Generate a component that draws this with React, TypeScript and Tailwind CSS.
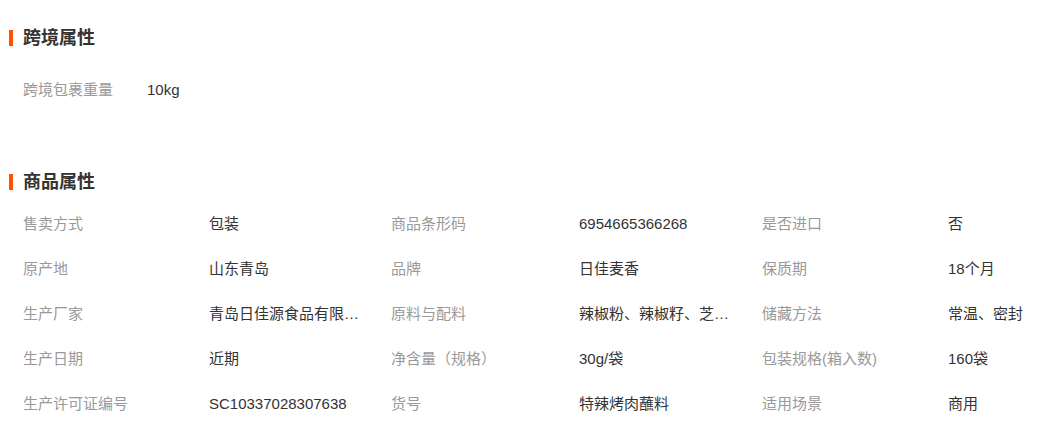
import { Fragment } from 'react';

const font = { fontFamily: '"Liberation Sans", "Noto Sans CJK SC", sans-serif' };

const rows: [string, string][][] = [
  [
    ['售卖方式', '包装'],
    ['商品条形码', '6954665366268'],
    ['是否进口', '否'],
  ],
  [
    ['原产地', '山东青岛'],
    ['品牌', '日佳麦香'],
    ['保质期', '18个月'],
  ],
  [
    ['生产厂家', '青岛日佳源食品有限公司'],
    ['原料与配料', '辣椒粉、辣椒籽、芝麻、食用盐'],
    ['储藏方法', '常温、密封'],
  ],
  [
    ['生产日期', '近期'],
    ['净含量（规格）', '30g/袋'],
    ['包装规格(箱入数)', '160袋'],
  ],
  [
    ['生产许可证编号', 'SC10337028307638'],
    ['货号', '特辣烤肉蘸料'],
    ['适用场景', '商用'],
  ],
];

function Title({ text }: { text: string }) {
  return (
    <div className="flex items-center h-[24px]">
      <span className="w-[4px] h-[16px] bg-[#ff5000] ml-[9px] mr-[10px]" />
      <h2 className="text-[18px] font-bold text-[#333]">{text}</h2>
    </div>
  );
}

export default function App() {
  return (
    <div className="w-[1045px] h-[445px] overflow-hidden bg-white pt-[26px]" style={font}>
      {/* 跨境属性 */}
      <Title text="跨境属性" />
      <div className="flex items-center h-[45px] mt-[18px] pl-[23px] text-[15px]">
        <span className="w-[124px] text-[#999]">跨境包裹重量</span>
        <span className="text-[#333]">10kg</span>
      </div>

      {/* 商品属性 */}
      <div className="mt-[57px]">
        <Title text="商品属性" />
        <div className="mt-[8px] pl-[23px] text-[15px]">
          {rows.map((row, i) => (
            <div key={i} className="grid grid-cols-[186px_182px_188px_183px_186px_1fr] items-center h-[45px]">
              {row.map(([label, value]) => (
                <Fragment key={label}>
                  <span className="text-[#999] whitespace-nowrap">{label}</span>
                  <span className="text-[#333] min-w-0 max-w-[152px] truncate">{value}</span>
                </Fragment>
              ))}
            </div>
          ))}
        </div>
      </div>
    </div>
  );
}
